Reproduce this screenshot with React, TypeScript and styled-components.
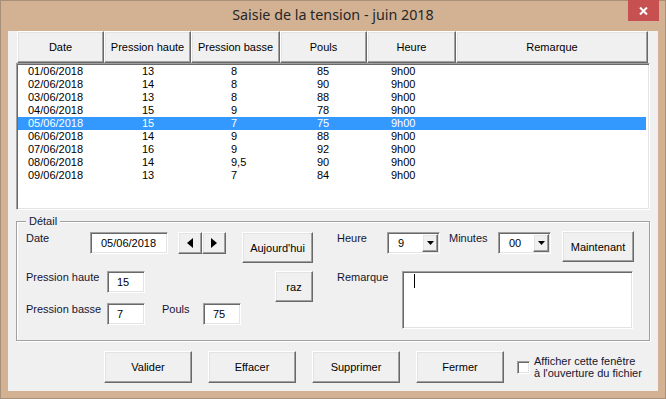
import React from 'react';
import styled, { createGlobalStyle, css } from 'styled-components';

const GlobalStyle = createGlobalStyle`
  html, body { margin: 0; padding: 0; background: #d3b294; }
  body { font-family: "Liberation Sans", Arial, sans-serif; font-size: 11px; color: #000; }
  * { box-sizing: border-box; }
`;

// classic 3D borders
const raised = css`
  background: #f0f0f0;
  border: 1px solid;
  border-color: #ffffff #696969 #696969 #ffffff;
  box-shadow: inset -1px -1px #a0a0a0, inset 1px 1px #e3e3e3;
`;

const sunken = css`
  background: #ffffff;
  border: 1px solid;
  border-color: #a0a0a0 #ffffff #ffffff #a0a0a0;
  box-shadow: inset 1px 1px #696969, inset -1px -1px #e3e3e3;
`;

const Window = styled.div`
  width: 666px;
  height: 399px;
  background: #d3b294;
  border: 1px solid #a88f77;
  display: flex;
  flex-direction: column;
`;

const TitleBar = styled.div`
  height: 30px;
  display: grid;
  grid-template-columns: 1fr auto 1fr;
`;

const Title = styled.div`
  grid-column: 2;
  font-family: "Noto Sans", "Open Sans", sans-serif;
  font-size: 14.3px;
  line-height: 28px;
  color: #262626;
  white-space: nowrap;
`;

const CloseButton = styled.div`
  grid-column: 3;
  justify-self: end;
  align-self: start;
  width: 31px;
  height: 21px;
  margin: -1px 6px 0 0;
  background: #c75050;
  display: flex;
  align-items: center;
  justify-content: center;
`;

const Client = styled.div`
  flex: 1;
  margin: 0 7px 7px;
  background: #f0f0f0;
  display: flex;
  flex-direction: column;
`;

const Header = styled.div`
  margin-left: 9px;
  width: 631px;
  height: 32px;
  display: grid;
  grid-template-columns: 87px 87px 89px 87px 89px 192px;
`;

const HeaderCell = styled.div`
  ${raised};
  display: flex;
  align-items: center;
  justify-content: center;
  white-space: nowrap;
`;

const ListBox = styled.div`
  ${sunken};
  margin-left: 8px;
  width: 634px;
  height: 147px;
  padding: 1px 3px 0 1px;
`;

const Row = styled.div<{ $selected?: boolean }>`
  display: grid;
  grid-template-columns: 114px 89px 86px 74px 1fr;
  padding-left: 10px;
  height: 13px;
  line-height: 13px;
  background: ${(p) => (p.$selected ? '#3399ff' : 'transparent')};
  color: ${(p) => (p.$selected ? '#ffffff' : '#000000')};
  white-space: nowrap;
`;

const Group = styled.div`
  position: relative;
  margin: 11px 0 0 8px;
  width: 634px;
  height: 120px;
  border: 1px solid #a0a0a0;
  box-shadow: inset 1px 1px #ffffff, 1px 1px #ffffff;
  padding: 9px 0 0 9px;
  display: flex;
  gap: 24px;
  align-items: flex-start;
`;

const Legend = styled.span`
  position: absolute;
  top: -7px;
  left: 9px;
  padding: 0 3px;
  background: #f0f0f0;
  line-height: 13px;
  color: #151530;
`;

const Column = styled.div<{ $width: number }>`
  width: ${(p) => p.$width}px;
  display: flex;
  flex-direction: column;
`;

const Line = styled.div<{ $top?: number }>`
  display: flex;
  align-items: flex-start;
  margin-top: ${(p) => p.$top ?? 0}px;
`;

const Label = styled.div<{ $width: number; $left?: number; $top?: number }>`
  width: ${(p) => p.$width}px;
  margin-left: ${(p) => p.$left ?? 0}px;
  margin-top: ${(p) => p.$top ?? 0}px;
  line-height: 13px;
  color: #151530;
  white-space: nowrap;
`;

const TextBox = styled.div<{ $width: number; $pad?: number; $top?: number }>`
  ${sunken};
  width: ${(p) => p.$width}px;
  height: 22px;
  margin-top: ${(p) => p.$top ?? 0}px;
  padding-left: ${(p) => p.$pad ?? 9}px;
  line-height: 20px;
  white-space: nowrap;
`;

const Button = styled.div<{ $width: number; $height?: number; $left?: number; $top?: number; $push?: boolean }>`
  ${raised};
  width: ${(p) => p.$width}px;
  height: ${(p) => p.$height ?? 31}px;
  margin-left: ${(p) => (p.$push ? 'auto' : `${p.$left ?? 0}px`)};
  margin-top: ${(p) => p.$top ?? 0}px;
  display: flex;
  align-items: center;
  justify-content: center;
  white-space: nowrap;
  flex-shrink: 0;
`;

const SpinPair = styled.div`
  display: flex;
  margin: 1px 0 0 10px;
`;

const FieldStack = styled.div`
  display: flex;
  flex-direction: column;
  gap: 10px;
`;

const Combo = styled.div<{ $left?: number }>`
  ${sunken};
  width: 53px;
  height: 22px;
  margin: 1px 0 0 ${(p) => p.$left ?? 0}px;
  display: flex;
  align-items: center;
  padding: 1px 1px 1px 10px;
`;

const ComboValue = styled.span`
  flex: 1;
  line-height: 18px;
`;

const DropButton = styled.div`
  ${raised};
  width: 16px;
  height: 18px;
  display: flex;
  align-items: center;
  justify-content: center;
`;

const Memo = styled.div`
  ${sunken};
  width: 231px;
  height: 58px;
  padding: 2px 0 0 11px;
`;

const Caret = styled.div`
  width: 1px;
  height: 14px;
  background: #000;
`;

const Footer = styled.div`
  margin-top: 10px;
  padding-left: 96px;
  display: flex;
  align-items: center;
`;

const FooterButtons = styled.div`
  display: flex;
  gap: 16px;
`;

const CheckRow = styled.div`
  margin-left: 13px;
  display: flex;
  align-items: center;
  gap: 4px;
`;

const CheckBox = styled.div`
  ${sunken};
  width: 13px;
  height: 13px;
`;

const CheckText = styled.div`
  line-height: 12px;
  color: #151530;
  white-space: nowrap;
`;

const TriLeft = () => (
  <svg width="6" height="10" viewBox="0 0 6 10"><path d="M6 0 L0 5 L6 10 Z" fill="#000" /></svg>
);
const TriRight = () => (
  <svg width="6" height="10" viewBox="0 0 6 10"><path d="M0 0 L6 5 L0 10 Z" fill="#000" /></svg>
);
const TriDown = () => (
  <svg width="7" height="4" viewBox="0 0 7 4"><path d="M0 0 L7 0 L3.5 4 Z" fill="#000" /></svg>
);

const rows = [
  ['01/06/2018', '13', '8', '85', '9h00'],
  ['02/06/2018', '14', '8', '90', '9h00'],
  ['03/06/2018', '13', '8', '88', '9h00'],
  ['04/06/2018', '15', '9', '78', '9h00'],
  ['05/06/2018', '15', '7', '75', '9h00'],
  ['06/06/2018', '14', '9', '88', '9h00'],
  ['07/06/2018', '16', '9', '92', '9h00'],
  ['08/06/2018', '14', '9,5', '90', '9h00'],
  ['09/06/2018', '13', '7', '84', '9h00'],
];

const columns = ['Date', 'Pression haute', 'Pression basse', 'Pouls', 'Heure', 'Remarque'];

export default function App() {
  const selected = 4;
  return (
    <>
      <GlobalStyle />
      <Window>
        <TitleBar>
          <Title>Saisie de la tension - juin 2018</Title>
          <CloseButton>
            <svg width="9" height="8" viewBox="0 0 9 8">
              <path d="M1 0.5 L8 7.5 M8 0.5 L1 7.5" stroke="#fff" strokeWidth="2" />
            </svg>
          </CloseButton>
        </TitleBar>
        <Client>
          <Header>
            {columns.map((c) => (
              <HeaderCell key={c}>{c}</HeaderCell>
            ))}
          </Header>
          <ListBox>
            {rows.map((r, i) => (
              <Row key={r[0]} $selected={i === selected}>
                {r.map((v, j) => (
                  <span key={j}>{v}</span>
                ))}
              </Row>
            ))}
          </ListBox>

          <Group>
            <Legend>Détail</Legend>
            <Column $width={287}>
              <Line>
                <Label $width={64} $top={1}>Date</Label>
                <TextBox $width={78} $top={1} $pad={10}>05/06/2018</TextBox>
                <SpinPair>
                  <Button $width={24} $height={22}><TriLeft /></Button>
                  <Button $width={24} $height={22}><TriRight /></Button>
                </SpinPair>
                <Button $width={71} $left={16} $top={1}>Aujourd'hui</Button>
              </Line>
              <Line $top={8}>
                <FieldStack>
                  <Line>
                    <Label $width={81}>Pression haute</Label>
                    <TextBox $width={38}>15</TextBox>
                  </Line>
                  <Line>
                    <Label $width={81}>Pression basse</Label>
                    <TextBox $width={38}>7</TextBox>
                    <Label $width={41} $left={17}>Pouls</Label>
                    <TextBox $width={38}>75</TextBox>
                  </Line>
                </FieldStack>
                <Button $width={38} $push>raz</Button>
              </Line>
            </Column>

            <Column $width={297}>
              <Line>
                <Label $width={50} $top={1}>Heure</Label>
                <Combo>
                  <ComboValue>9</ComboValue>
                  <DropButton><TriDown /></DropButton>
                </Combo>
                <Label $width={49} $left={9} $top={1}>Minutes</Label>
                <Combo>
                  <ComboValue>00</ComboValue>
                  <DropButton><TriDown /></DropButton>
                </Combo>
                <Button $width={72} $left={11}>Maintenant</Button>
              </Line>
              <Line $top={9}>
                <Label $width={65}>Remarque</Label>
                <Memo>
                  <Caret />
                </Memo>
              </Line>
            </Column>
          </Group>

          <Footer>
            <FooterButtons>
              <Button $width={88} $height={32}>Valider</Button>
              <Button $width={88} $height={32}>Effacer</Button>
              <Button $width={88} $height={32}>Supprimer</Button>
              <Button $width={88} $height={32}>Fermer</Button>
            </FooterButtons>
            <CheckRow>
              <CheckBox />
              <CheckText>
                Afficher cette fenêtre
                <br />
                à l'ouverture du fichier
              </CheckText>
            </CheckRow>
          </Footer>
        </Client>
      </Window>
    </>
  );
}
